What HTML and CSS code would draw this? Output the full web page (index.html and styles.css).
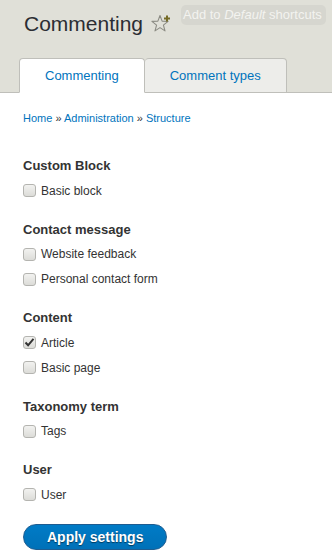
FILE: index.html
```html
<!DOCTYPE html>
<html lang="en">
<head>
    <meta charset="UTF-8">
    <title>Commenting</title>
    <link rel="stylesheet" href="styles.css">
</head>
<body>
    <div class="header">
        <div class="title-row">
            <h1 class="page-title">Commenting</h1>
            <a class="shortcut" href="#">
                <svg width="20" height="20" viewBox="0 0 20 20">
                    <polygon points="9,2.5 11.12,8.09 17.08,8.37 12.42,12.11 14,17.88 9,14.6 4,17.88 5.58,12.11 0.92,8.37 6.88,8.09" fill="none" stroke="#8c8c84" stroke-width="1.1" stroke-linejoin="round"/>
                    <path d="M13 5.5h6M16 2.5v6" stroke="#756b26" stroke-width="2"/>
                </svg>
            </a>
            <span class="shortcut-tip">Add to <em>Default</em> shortcuts</span>
        </div>
        <ul class="tabs">
            <li class="tab active"><a href="#">Commenting</a></li>
            <li class="tab"><a href="#">Comment types</a></li>
        </ul>
    </div>

    <div class="content">
        <div class="breadcrumb">
            <a href="#">Home</a> » <a href="#">Administration</a> » <a href="#">Structure</a>
        </div>

        <form class="settings">
            <div class="group">
                <h3>Custom Block</h3>
                <label class="row"><input type="checkbox"> Basic block</label>
            </div>
            <div class="group">
                <h3>Contact message</h3>
                <label class="row"><input type="checkbox"> Website feedback</label>
                <label class="row"><input type="checkbox"> Personal contact form</label>
            </div>
            <div class="group">
                <h3>Content</h3>
                <label class="row"><input type="checkbox" checked> Article</label>
                <label class="row"><input type="checkbox"> Basic page</label>
            </div>
            <div class="group">
                <h3>Taxonomy term</h3>
                <label class="row"><input type="checkbox"> Tags</label>
            </div>
            <div class="group">
                <h3>User</h3>
                <label class="row"><input type="checkbox"> User</label>
            </div>
            <button type="button" class="button">Apply settings</button>
        </form>
    </div>
</body>
</html>
```

FILE: styles.css
```css
body {
    margin: 0;
    font-family: 'Liberation Sans', Arial, sans-serif;
    color: #333;
    background: #fff;
}
a {
    color: #0074bd;
    text-decoration: none;
}
.header {
    background: #e0e0d8;
    padding: 11px 0 0 19px;
    border-bottom: 1px solid #bfbfba;
}
.title-row {
    position: relative;
    display: flex;
    align-items: center;
    padding-left: 5px;
}
.page-title {
    margin: 0;
    font-size: 21px;
    line-height: 25px;
    font-weight: normal;
    color: #2b2d33;
}
.shortcut {
    display: flex;
    margin-left: 8px;
    margin-top: -2px;
}
.shortcut-tip {
    position: absolute;
    left: 162px;
    top: -6px;
    padding: 1px 4px 2px 2px;
    background: #d6d6cf;
    color: #f3f3ef;
    border-radius: 5px;
    font-size: 13px;
    line-height: 17px;
    white-space: nowrap;
}
.tabs {
    display: flex;
    list-style: none;
    margin: 22px 0 -1px 0;
    padding: 0;
}
.tab {
    border: 1px solid #bfbfba;
    border-radius: 4px 4px 0 0;
    background: #ededea;
    font-size: 13px;
    line-height: 33px;
}
.tab + .tab {
    border-left: none;
}
.tab a {
    display: block;
    padding: 0 25px;
}
.tab.active {
    background: #fff;
    border-bottom-color: #fff;
}
.content {
    padding: 18px 0 20px 23px;
}
.breadcrumb {
    font-size: 11px;
    line-height: 14px;
    color: #333;
}
.settings {
    margin-top: 31px;
}
.group {
    margin-bottom: 16.5px;
}
.group h3 {
    margin: 0 0 2px 0;
    font-size: 13px;
    line-height: 20px;
    font-weight: bold;
    color: #333;
}
.row {
    display: flex;
    align-items: center;
    height: 25px;
    font-size: 12px;
    color: #333;
}
.row input {
    appearance: none;
    -webkit-appearance: none;
    width: 13px;
    height: 13px;
    margin: 0 5px 0 0;
    border: 1px solid #b4b4b0;
    border-radius: 3px;
    background: linear-gradient(#f2f2f0, #dcdcd8);
    background-position: center;
    background-repeat: no-repeat;
}
.row input:checked {
    background-image: url("data:image/svg+xml,%3Csvg xmlns='http://www.w3.org/2000/svg' width='11' height='11' viewBox='0 0 11 11'%3E%3Cpath d='M1.5 5.5l2.6 2.8L9.5 1.8' fill='none' stroke='%23333' stroke-width='2'/%3E%3C/svg%3E"), linear-gradient(#f2f2f0, #dcdcd8);
}
.button {
    padding: 0 23px;
    height: 26px;
    border: 1px solid #1e5c90;
    border-radius: 20px;
    background: linear-gradient(#007bc6, #0071b8);
    color: #fff;
    font-family: 'Liberation Sans', Arial, sans-serif;
    font-size: 14px;
    font-weight: bold;
    text-shadow: 0 1px 1px rgba(0, 0, 0, 0.5);
    cursor: pointer;
}
```
